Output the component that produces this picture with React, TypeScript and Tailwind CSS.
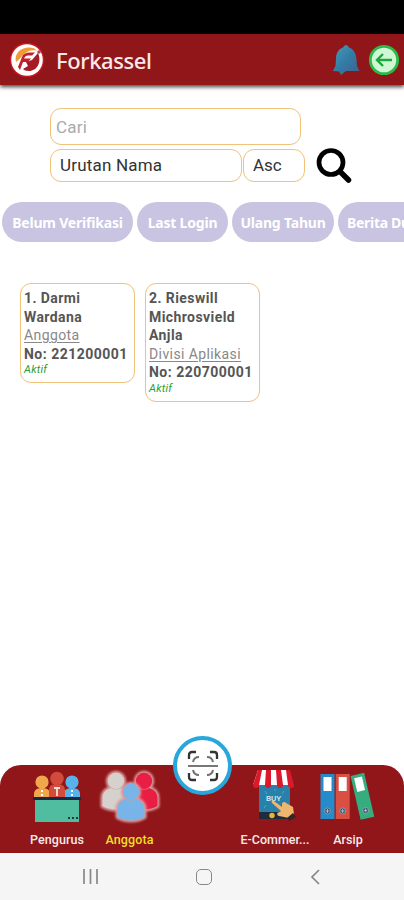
import React from "react";

function Logo() {
  return (
    <svg width="36" height="36" viewBox="0 0 36 36" className="shrink-0">
      <circle cx="18" cy="18" r="17.3" fill="#c9161f" />
      <circle cx="18" cy="18" r="15.8" fill="#fff" />
      <path d="M7 20C5 12 11 5.500 20 5.500c4 0 6 1 8 3-5-1-9 0-12 3-4 3-5 6-9 8.500z" fill="#ef9b36" />
      <path d="M9 25l4-10c1-3 4-4.500 8-4.500h5l-3 3h-4c-2 0-3 1-4 3h7l-3 3.500h-5l-3 8z" fill="#c3202b" />
      <path d="M17 20l6-2 6-7c4 9-1 18-9 18-3 0-5-1-6-2l5-3z" fill="#a71b24" />
      <circle cx="30" cy="10" r="1.8" fill="#a84e60" />
    </svg>
  );
}

function Bell() {
  return (
    <svg width="28" height="32" viewBox="0 0 28 32" className="shrink-0">
      <defs>
        <linearGradient id="bell" x1="0" y1="0" x2="1" y2="1">
          <stop offset="0" stopColor="#4d9cba" />
          <stop offset=".5" stopColor="#327ca5" />
          <stop offset="1" stopColor="#3f608c" />
        </linearGradient>
      </defs>
      <path d="M14 1c1.200 0 2 1 3 2.500 5 2 7 6 7.500 11.500l.5 7 2.500 5H14l-5 4-2-3.500-6-.5 2.500-5 .5-7C4 9.500 6 5.500 11 3.500 12 2 13 1 14 1z" fill="url(#bell)" />
    </svg>
  );
}

function Back() {
  return (
    <svg width="32" height="32" viewBox="0 0 32 32" className="shrink-0">
      <circle cx="16" cy="16" r="13.7" fill="#d0f7d4" stroke="#2cb94a" strokeWidth="2.8" />
      <path d="M24 16H9M15 10l-6 6 6 6" fill="none" stroke="#1da73c" strokeWidth="2.4" />
    </svg>
  );
}

function TeamIcon() {
  return (
    <svg width="48" height="52" viewBox="0 0 48 52">
      <circle cx="9" cy="11" r="6.6" fill="#f0a64a" />
      <path d="M1 28v-5c0-4 3-6 8-6s8 2 8 6v5z" fill="#f0a64a" />
      <circle cx="39" cy="11" r="6.6" fill="#57b4e8" />
      <path d="M31 28v-5c0-4 3-6 8-6s8 2 8 6v5z" fill="#57b4e8" />
      <circle cx="24" cy="7.500" r="6.8" fill="#d14c3c" />
      <path d="M16 28v-9c0-4 3-6 8-6s8 2 8 6v9z" fill="#d14c3c" />
      <path d="M21 17h6M24 17v8" stroke="#f7ded4" strokeWidth="1.8" />
      <path d="M9 19v2m0 2v2M39 19v2m0 2v2" stroke="#fff" strokeWidth="2" />
      <path d="M2 28h44v23H2z" fill="#51bda0" />
      <path d="M0 26h48v3H0z" fill="#1c2745" />
      <path d="M35 47h2m2 0h2m2 0h2" stroke="#263744" strokeWidth="2" />
    </svg>
  );
}

function Person({ x, y, color, halo = false }: { x: number; y: number; color: string; halo?: boolean }) {
  return (
    <g transform={`translate(${x} ${y})`} fill={halo ? "#dc9a9c" : color} stroke={halo ? "#dc9a9c" : "none"} strokeWidth="4" strokeLinejoin="round">
      <circle cx="0" cy="0" r="8.200" />
      <path d="M-13.500 25V17C-13.500 11-9 8-5 7c3 2 7 2 10 0 4 1 8.500 4 8.500 10v8c-7 4.500-20 4.500-27 0z" />
    </g>
  );
}

function PeopleIcon() {
  return (
    <svg width="64" height="56" viewBox="0 0 64 56" className="overflow-visible">
      <defs>
        <filter id="glow" x="-20%" y="-20%" width="140%" height="140%"><feGaussianBlur stdDeviation=".8" /></filter>
      </defs>
      <g filter="url(#glow)">
        <Person halo x={18} y={12} color="#d5d1cc" />
        <Person halo x={46} y={12} color="#e91e45" />
      </g>
      <Person x={18} y={12} color="#d5d1cc" />
      <Person x={46} y={12} color="#e91e45" />
      <g filter="url(#glow)"><Person halo x={33} y={23} color="#78b4e7" /></g>
      <Person x={33} y={23} color="#78b4e7" />
    </svg>
  );
}

function StoreIcon() {
  return (
    <svg width="44" height="52" viewBox="0 0 44 52">
      <rect x="6" y="10" width="31" height="40" rx="2" fill="#2980aa" />
      <path d="M6 43h31v7H6z" fill="#202b3c" />
      <path d="M5 1h31l4 15H0z" fill="#fff" />
      <path d="M5 1h4L6 16H0zM13 1h5v15h-6zM23 1h5l2 15h-6zM33 1h4l4 15h-6z" fill="#dc192c" />
      <path d="M0 15h6v1a3 3 0 01-6 0zm12 0h6v1a3 3 0 01-6 0zm12 0h6v1a3 3 0 01-6 0zm11 0h6v1a3 3 0 01-6 0z" fill="#dc192c" />
      <text x="13" y="32" fill="#d5f0f5" fontSize="8" fontFamily="Roboto">BUY</text>
      <path d="M13 36l-2 3m18-14l2-3m-17 3l-2-3m10 0v-2" stroke="#45abc1" />
      <circle cx="19" cy="46.500" r="2.7" fill="#e6b630" />
      <path d="M21 32l8 6v-3c0-2 3-3 4-1l7 4 1 7-5 4-10-2c-3-1-2-4 1-4l1-1-9-8c-1-2 0-3 2-2z" fill="#efb66e" />
      <path d="M40 44l3 4-7 4-2-3z" fill="#31262d" />
    </svg>
  );
}

function Folder({ color }: { color: string }) {
  return (
    <g>
      <rect width="14" height="45" fill={color} />
      <rect x="3" y="3" width="8" height="14" fill="#fff" />
      <circle cx="7" cy="37" r="3" fill="#344f68" stroke="#9badb9" strokeWidth=".7" />
      <path d="M5 37h4m-2-2v4" stroke="#bed1db" strokeWidth=".8" />
    </g>
  );
}

function ArchiveIcon() {
  return (
    <svg width="56" height="50" viewBox="0 0 56 50">
      <g transform="translate(.5 3)"><Folder color="#268bcb" /></g>
      <g transform="translate(15.700 3)"><Folder color="#d95043" /></g>
      <g transform="translate(30.500 5) rotate(-13)"><Folder color="#35ad7e" /></g>
    </svg>
  );
}

function ScanIcon() {
  return (
    <svg width="32" height="32" viewBox="0 0 32 32" fill="none">
      <path d="M2 9V5q0-3 3-3h4m14 0h4q3 0 3 3v4M2 23v4q0 3 3 3h4m14 0h4q3 0 3-3v-4" stroke="#343434" strokeWidth="2.3" />
      <path d="M6 12q1-5 6-5m8 0q5 0 6 5M6 20q1 5 6 5m8 0q5 0 6-5" stroke="#707070" strokeWidth="2" />
      <path d="M1 16h30" stroke="#777" strokeWidth="2" />
    </svg>
  );
}

function Card({ lines, role, number }: { lines: string[]; role: string; number: string }) {
  return (
    <article className="w-[115px] rounded-[11px] border border-[#f0c27a] pt-[5px] pb-[5px] pl-[3px] text-[14px] leading-[18.500px] whitespace-nowrap text-[#555]">
      {lines.map((line) => <div key={line} className="font-bold tracking-[.42px]">{line}</div>)}
      <div className="text-[#888] underline underline-offset-2 tracking-[.4px]">{role}</div>
      <div className="font-bold tracking-[.48px]">No: {number}</div>
      <div className="text-[11px] leading-[14px] tracking-[.2px] text-[#269e36] italic">Aktif</div>
    </article>
  );
}

export default function App() {
  return (
    <div className="flex h-[900px] w-[404px] flex-col overflow-hidden bg-white font-['Roboto',sans-serif]">
      <div className="h-[34px] shrink-0 bg-black" />
      <header className="flex h-[51px] shrink-0 items-center bg-[#901619] pr-[4px] pl-[9px] shadow-[0_2px_4px_#444]">
        <Logo />
        <h1 className="ml-[11px] font-['Noto_Sans',sans-serif] text-[22px] leading-8 font-medium tracking-[-.4px] text-[#f8eaea]">Forkassel</h1>
        <div className="ml-auto flex items-center gap-[8px]"><Bell /><Back /></div>
      </header>
      <main className="flex-1">
        <section className="flex pt-[23px] pl-[50px]">
          <div className="w-[255px]">
            <input aria-label="Cari" placeholder="Cari" className="block h-[37px] w-[251px] rounded-[11px] border border-[#f0c27a] pl-[5px] text-[17px] tracking-[.2px] outline-none placeholder:text-[#aaa]" />
            <div className="mt-[4px] flex gap-[1px] text-[17px] text-[#333]">
              <button className="h-[33px] w-[192px] rounded-[11px] border border-[#f0c27a] pl-[9px] text-left tracking-[.2px]">Urutan Nama</button>
              <button className="h-[33px] w-[62px] rounded-[11px] border border-[#f0c27a] pl-[9px] text-left">Asc</button>
            </div>
          </div>
          <svg width="36" height="36" viewBox="0 0 36 36" className="mt-[40px] ml-[11px]" fill="none" stroke="#000">
            <circle cx="15" cy="14.500" r="12" strokeWidth="4.700" />
            <path d="M24 23.500l8.500 8.500" strokeWidth="5.500" strokeLinecap="round" />
          </svg>
        </section>
        <section className="mt-[18px] flex w-[404px] gap-[4px] overflow-hidden pl-[2px] font-['Noto_Sans',sans-serif] text-[14px] font-bold tracking-[-.2px] text-white">
          <button className="h-10 w-[131px] shrink-0 rounded-full bg-[#c8c4e1]">Belum Verifikasi</button>
          <button className="h-10 w-[91px] shrink-0 rounded-full bg-[#c8c4e1]">Last Login</button>
          <button className="h-10 w-[102px] shrink-0 rounded-full bg-[#c8c4e1]">Ulang Tahun</button>
          <button className="h-10 w-[110px] shrink-0 rounded-full bg-[#c8c4e1] pl-[9px] text-left tracking-[-.3px] whitespace-nowrap">Berita Duka</button>
        </section>
        <section className="mt-[41px] flex items-start gap-[10px] pl-[20px]">
          <Card lines={["1. Darmi", "Wardana"]} role="Anggota" number="221200001" />
          <Card lines={["2. Rieswill", "Michrosvield", "Anjla"]} role="Divisi Aplikasi" number="220700001" />
        </section>
      </main>
      <nav className="relative flex h-[88px] shrink-0 rounded-t-[21px] bg-[#901619] pl-[21px] text-[12.500px] font-medium text-[#f5eaea]">
        <div className="flex w-[72px] flex-col items-center pt-[6px]"><TeamIcon /><span className="mt-[9px] leading-[16px] tracking-[.1px]">Pengurus</span></div>
        <div className="flex w-[73px] flex-col items-center pt-[4px] text-[#f2df24]"><PeopleIcon /><span className="mt-[7px] leading-[16px] tracking-[.1px]">Anggota</span></div>
        <div className="ml-[72px] flex w-[74px] flex-col items-center pt-[4px]"><StoreIcon /><span className="mt-[11px] leading-[16px]">E-Commer...</span></div>
        <div className="flex w-[72px] flex-col items-center pt-[6px]"><ArchiveIcon /><span className="mt-[11px] leading-[16px]">Arsip</span></div>
        <button className="absolute top-[-29px] left-[173px] flex h-[59px] w-[59px] items-center justify-center rounded-full border-[4px] border-[#28a7dd] bg-white"><ScanIcon /></button>
      </nav>
      <footer className="flex h-[47px] shrink-0 items-center bg-[#f5f5f5] pl-[82px]">
        <svg width="17" height="17" viewBox="0 0 17 17" stroke="#888" strokeWidth="1.700"><path d="M2 1v15M8.500 1v15M15 1v15" /></svg>
        <span className="ml-[97px] h-[16px] w-[16px] rounded-[5px] border-[1.500px] border-[#888]" />
        <svg width="10" height="16" viewBox="0 0 10 16" className="ml-[98px]" fill="none" stroke="#888" strokeWidth="1.700"><path d="M9 1L2 8l7 7" /></svg>
      </footer>
    </div>
  );
}
